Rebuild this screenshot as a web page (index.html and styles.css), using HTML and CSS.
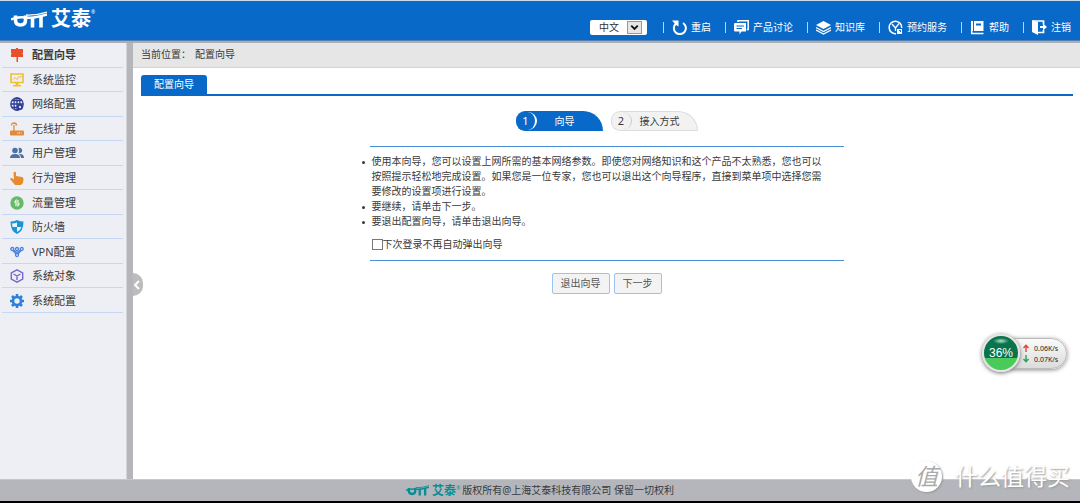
FILE: index.html
```html
<!DOCTYPE html>
<html lang="zh-CN">
<head>
<meta charset="utf-8">
<meta name="viewport" content="width=device-width, initial-scale=1">
<title>配置向导</title>
<link rel="stylesheet" href="styles.css">
</head>
<body>
<svg class="defs" aria-hidden="true">
  <symbol id="mark" viewBox="0 0 36 17">
    <g fill="none" stroke="currentColor">
      <path d="M4.500 4.500v4.500q0 5 5 5t5-5V4.500" stroke-width="3.600"/>
      <path d="M21.500 6v10.500M30 5v11.500" stroke-width="3.600"/>
      <path d="M0 8.500Q6 5.500 15 6.500T36 3.500" stroke-width="2.400"/>
      <path d="M15 4Q25 4.500 36 1" stroke-width="1.300"/>
    </g>
  </symbol>
</svg>

<header class="topbar">
  <div class="logo"><svg class="logo-mark" aria-hidden="true"><use href="#mark"/></svg><span class="logo-name">艾泰</span><sup class="logo-reg">®</sup></div>
  <div class="tools">
    <div class="lang">
      <select aria-label="语言"><option>中文</option><option>English</option></select>
      <span class="lang-arrow"><svg viewBox="0 0 14 11"><path d="M3.500 3.500L7 7l3.500-3.500" fill="none" stroke="#111" stroke-width="2"/></svg></span>
    </div>
    <nav class="links">
      <a href="#"><svg viewBox="0 0 15 15"><path d="M4 3.500A6 6 0 1 0 11 3" fill="none" stroke="#fff" stroke-width="2"/><path d="M0 0.500h6.500v6L4 5z" fill="#fff"/></svg>重启</a>
      <a href="#"><svg viewBox="0 0 15 15"><path d="M4 2V.8h10.200v8.700h-1.500" fill="none" stroke="#fff" stroke-width="1.500"/><path d="M1 3h11v8.500H7.500l-2 3v-3H1q-1 0-1-1V4q0-1 1-1z" fill="#fff"/><path d="M2.500 6H10M2.500 8.500H8" stroke="#0969c9"/></svg>产品讨论</a>
      <a href="#"><svg viewBox="0 0 15 15"><path d="M7.500 1L15 5 7.500 9 0 5z" fill="#fff"/><path d="M0 7.500l7.500 4 7.500-4M0 10l7.500 4 7.500-4" fill="none" stroke="#fff" stroke-width="1.300"/></svg>知识库</a>
      <a href="#"><svg viewBox="0 0 15 15"><path d="M8 13.700A6.300 6.300 0 1 1 13.700 8" fill="none" stroke="#fff" stroke-width="1.500"/><path d="M4 4l3.500 4L11 3.500M7.500 8v3" fill="none" stroke="#fff" stroke-width="1.300"/><path d="M9 9h5v5H9z" fill="#fff"/><path d="M11 10.500h1.500V12" fill="none" stroke="#0969c9"/></svg>预约服务</a>
      <a href="#"><svg viewBox="0 0 15 15"><path d="M1 1h12.500v10H1z" fill="#fff"/><path d="M1.700 8v5.500h11.800" fill="none" stroke="#fff" stroke-width="1.500"/><path d="M3.500 1v10" stroke="#0969c9"/><path d="M6 3.500h5v2H6z" fill="#0969c9"/></svg>帮助</a>
      <a href="#"><svg viewBox="0 0 15 15"><path d="M0 0l6 2v13l-6-3z" fill="#fff"/><path d="M1 1h10.500v3.500M5 12.500h6.500V10" fill="none" stroke="#fff" stroke-width="1.700"/><path d="M8 6h3V3.500L15 7l-4 3.500V8H8z" fill="#fff"/></svg>注销</a>
    </nav>
  </div>
</header>

<div class="main">
  <aside class="sidebar">
    <nav class="menu">
      <a class="current" href="#"><svg viewBox="0 0 14 14"><path d="M1 1h5V0h2v1h5v4l-1 .5 1 .5v3H8v5H6.500V9H1V6l1-.5L1 5z" fill="#e8502c"/></svg>配置向导</a>
      <a href="#"><svg viewBox="0 0 14 14"><path d="M1 1h12v8.500H1z" fill="none" stroke="#f1c02e" stroke-width="1.600"/><path d="M3 6.500l2-2 2 2L9 3.500l1 1L12 3" fill="none" stroke="#f1c02e"/><path d="M5.500 10h3v2h2.500v1.500H3V12h2.500z" fill="#f1c02e"/></svg>系统监控</a>
      <a href="#"><svg viewBox="0 0 14 14"><g fill="none" stroke="#2b3992" stroke-width="1.300"><circle cx="7" cy="7" r="6.200"/><ellipse cx="7" cy="7" rx="3" ry="6.200"/><path d="M1 7h12M2 3.700h10M2 10.300h10M7 1v12"/></g><circle cx="10" cy="10" r="3" fill="#2b3992"/><circle cx="10" cy="10" r="1.200" fill="#dfe2f3"/></svg>网络配置</a>
      <a href="#"><svg viewBox="0 0 14 14"><path d="M1 8.500h12q1 0 1 1V12.500q0 1-1 1H1q-1 0-1-1V9.500q0-1 1-1z" fill="#e28a38"/><path d="M4 9V3M1.500 3.500q0-2.500 2.500-2.500t2.500 2.500" fill="none" stroke="#e28a38" stroke-width="1.300"/><path d="M7.500 11h4" stroke="#fff" stroke-dasharray="1 .7"/></svg>无线扩展</a>
      <a href="#"><svg viewBox="0 0 14 14"><g fill="#4c71a3"><circle cx="5" cy="4.500" r="2.800"/><path d="M0 12q0-4 5-4t5 4z"/><path d="M8.500 2a2.700 2.700 0 1 1 0 5q1-2.500 0-5zM10 8q4 0 4 4h-3q0-2.500-2-3.700z"/></g></svg>用户管理</a>
      <a href="#"><svg viewBox="0 0 14 14"><path d="M3.500 1.500Q5 0 6 1.500V5l6 1q1.500.5 1.500 2L13 12l-2 2H5L0 8q1-1.500 2.500-.5L4 8.500z" fill="#e58c31"/></svg>行为管理</a>
      <a href="#"><svg viewBox="0 0 14 14"><circle cx="7" cy="7" r="6.700" fill="#67ba67"/><path d="M6 10V4.500L4.500 6.500M8 4v5.500L9.500 7.500" fill="none" stroke="#fff" stroke-width="1.100"/></svg>流量管理</a>
      <a href="#"><svg viewBox="0 0 14 14"><path d="M7 0q3 1.500 6.500 1.500 0 10-6.500 12.500Q.5 11.500.5 1.500 4 1.500 7 0z" fill="#1994d8"/><path d="M7 2.500V7H2.500L2 3.500q3 0 5-1zM7 7h4.500Q10.500 10.500 7 12z" fill="#e9f4fb"/></svg>防火墙</a>
      <a href="#"><svg viewBox="0 0 14 14"><g fill="none" stroke="#4a83e0" stroke-width="1.300"><circle cx="2.300" cy="4" r="1.500"/><circle cx="7" cy="4" r="1.500"/><circle cx="11.700" cy="4" r="1.500"/><circle cx="7" cy="10" r="1.500"/><path d="M3 5.500l3 3.500M11 5.500l-3 3.500M3.500 5L7 7.500 10.500 5"/></g></svg>VPN配置</a>
      <a href="#"><svg viewBox="0 0 14 14"><path d="M7 .8l5.700 3v6.400l-5.700 3-5.700-3V3.800zM3.500 5L7 7l3.500-2M7 7v4" fill="none" stroke="#7766d0" stroke-width="1.400"/></svg>系统对象</a>
      <a href="#"><svg viewBox="0 0 14 14"><circle cx="7" cy="7" r="4" fill="none" stroke="#2b80dc" stroke-width="2.600"/><path d="M7 0v3M7 11v3M0 7h3M11 7h3M2 2l2 2M10 10l2 2M12 2l-2 2M4 10l-2 2" stroke="#2b80dc" stroke-width="2.600"/></svg>系统配置</a>
    </nav>
  </aside>

  <div class="splitter">
    <button class="collapse" type="button" aria-label="收起菜单"><svg viewBox="0 0 8 10"><path d="M6 1L2 5l4 4" fill="none" stroke="#fff" stroke-width="2"/></svg></button>
  </div>

  <main class="content">
    <div class="crumbs"><span>当前位置：</span><span>配置向导</span></div>
    <div class="tabs"><a class="tab" href="#">配置向导</a></div>
    <section class="wizard">
      <ol class="steps">
        <li class="step active"><span class="num">1</span><span class="label">向导</span></li>
        <li class="step"><span class="num">2</span><span class="label">接入方式</span></li>
      </ol>
      <div class="panel">
        <ul class="notes">
          <li>使用本向导，您可以设置上网所需的基本网络参数。即使您对网络知识和这个产品不太熟悉，您也可以<br>按照提示轻松地完成设置。如果您是一位专家，您也可以退出这个向导程序，直接到菜单项中选择您需<br>要修改的设置项进行设置。</li>
          <li>要继续，请单击下一步。</li>
          <li>要退出配置向导，请单击退出向导。</li>
        </ul>
        <label class="skip"><input type="checkbox">下次登录不再自动弹出向导</label>
      </div>
      <div class="actions">
        <button type="button">退出向导</button>
        <button type="button">下一步</button>
      </div>
    </section>
  </main>
</div>

<footer class="footer">
  <div class="logo small"><svg class="logo-mark" aria-hidden="true"><use href="#mark"/></svg><span class="logo-name">艾泰</span><sup class="logo-reg">®</sup></div>
  <span>版权所有@上海艾泰科技有限公司 保留一切权利</span>
</footer>

<div class="meter">
  <div class="ball">36%</div>
  <div class="rates">
    <div><svg viewBox="0 0 6 8"><path d="M3 8V2M.5 4L3 1.200 5.500 4" fill="none" stroke="#e2452f" stroke-width="1.400"/></svg>0.06K/s</div>
    <div><svg viewBox="0 0 6 8"><path d="M3 0v6M.5 4L3 6.800 5.500 4" fill="none" stroke="#27a255" stroke-width="1.400"/></svg>0.07K/s</div>
  </div>
</div>

<div class="watermark"><span class="seal">值</span><span>什么值得买</span></div>
</body>
</html>
```
FILE: styles.css
```css
* { box-sizing: border-box; }

body {
  margin: 0;
  min-height: 100vh;
  display: flex;
  flex-direction: column;
  position: relative;
  background: #b4b6bb;
  color: #3a3a3a;
  font: 10px/15px "Noto Sans", "Noto Sans CJK SC", sans-serif;
}

a { color: inherit; text-decoration: none; }
button, select, input { font: inherit; color: inherit; }
.defs { position: absolute; width: 0; height: 0; }

/* top bar */
.topbar {
  display: flex;
  justify-content: space-between;
  height: 43px;
  padding: 0 9px 0 11px;
  background: #0969c9;
  border-top: 1px solid #c9dcf0;
  border-bottom: 2px solid #a9adb5;
  box-shadow: inset 0 -1px #5580b0;
}
.logo { display: flex; align-items: center; color: #fff; height: 36px; }
.logo-mark { width: 36px; height: 17px; }
.logo-name { margin-left: 4px; font-size: 20px; line-height: 24px; font-weight: 700; }
.logo-reg { font-size: 5px; line-height: 5px; align-self: flex-start; margin-top: 9px; }

.tools { display: flex; align-items: center; gap: 16px; padding-top: 12px; color: #fff; }
.lang { position: relative; display: flex; }
.lang select {
  appearance: none;
  width: 57px;
  height: 15px;
  padding: 0 20px 0 9px;
  border: 0;
  border-radius: 2px;
  background: #fff;
  color: #333;
  line-height: 15px;
}
.lang-arrow {
  position: absolute;
  right: 5px;
  top: 1px;
  width: 15px;
  height: 13px;
  border: 1px solid #999;
  background: #e6e6e6;
  pointer-events: none;
}
.lang-arrow svg { display: block; width: 13px; height: 11px; }
.links { display: flex; gap: 14px; }
.links a { display: flex; align-items: center; white-space: nowrap; }
.links a::before { content: ""; width: 1px; height: 11px; background: #b9d5f1; }
.links svg { width: 15px; height: 15px; margin: 0 4px 0 8px; }

/* frame */
.main { flex: 1; display: flex; }
.sidebar { width: 127px; background: #eeeff5; border-right: 1px solid #d3d4da; }
.menu { display: grid; grid-auto-rows: 1fr; min-height: 270px; padding: 0 3px 0 2px; }
.menu a {
  display: flex;
  align-items: center;
  gap: 8px;
  padding: 1px 0 0 8px;
  border-bottom: 1px solid #c4d8f4;
  font-size: 11px;
  line-height: 16px;
}
.menu svg { width: 14px; height: 14px; }
.menu .current { font-weight: 700; }

.splitter { position: relative; width: 6px; background: #b4b6bb; }
.collapse {
  position: absolute;
  left: 6px;
  top: 230px;
  width: 10px;
  height: 23px;
  padding: 0;
  border: 0;
  border-radius: 0 12px 12px 0;
  background: #bcbcbc;
}
.collapse svg { display: block; width: 8px; height: 10px; }

.content { flex: 1; background: #fff; }
.crumbs {
  display: flex;
  gap: 4px;
  padding: 4px 8px 5px;
  background: #e6e6e6;
  border-bottom: 1px solid #d3d3d3;
}
.tabs { display: flex; margin: 7px 7px 0 8px; border-bottom: 2px solid #0969c9; }
.tab {
  padding: 2px 13px;
  border-radius: 3px 3px 0 0;
  background: #0969c9;
  color: #fff;
}

/* wizard */
.wizard { display: flex; flex-direction: column; align-items: center; padding-top: 15px; }
.steps { display: flex; gap: 8px; margin: 0; padding: 0; list-style: none; }
.step {
  display: flex;
  width: 87px;
  height: 20px;
  border: 1px solid #dcdcdc;
  border-radius: 10px 22px 0 10px;
  background: #f2f2f2;
  line-height: 18px;
}
.num {
  width: 20px;
  border-right: 1px solid #ccc;
  border-radius: 10px;
  text-align: center;
  font-size: 11px;
}
.label { flex: 1; padding-right: 9px; text-align: center; }
.step.active { background: #0969c9; border-color: #0969c9; color: #fff; }
.active .num { border-right: 2px solid #fff; }

.panel {
  width: 474px;
  max-width: 100%;
  margin-top: 15px;
  padding: 7px 0 8px 2px;
  border-top: 1px solid #4a90d9;
  border-bottom: 1px solid #4a90d9;
}
.notes { margin: 0; padding: 0; list-style: none; }
.notes li { position: relative; }
.notes li::before {
  content: "";
  position: absolute;
  left: -10px;
  top: 7px;
  width: 3px;
  height: 3px;
  border-radius: 50%;
  background: #3a3a3a;
}
.skip { display: flex; align-items: center; margin-top: 8px; }
.skip input {
  appearance: none;
  width: 11px;
  height: 11px;
  margin: 0;
  border: 1px solid #777;
  background: #fff;
}
.actions { display: flex; gap: 4px; margin-top: 12px; }
.actions button {
  height: 21px;
  padding: 0 8px;
  border: 1px solid #9cc3ef;
  border-radius: 2px;
  background: #f3f3f3;
  color: #555;
}

/* footer */
.footer {
  display: flex;
  align-items: center;
  justify-content: center;
  gap: 2px;
  height: 24px;
  border-top: 1px solid #c6c8cc;
  border-bottom: 2px solid #000;
  background: #b4b6bb;
  white-space: nowrap;
}
.small { height: 20px; color: #078e94; }
.small .logo-mark { width: 23px; height: 11px; }
.small .logo-name { margin-left: 3px; font-size: 12px; line-height: 15px; }
.small .logo-reg { margin-top: 5px; }

/* floating speed meter */
.meter { position: absolute; right: 13px; top: 334px; display: flex; align-items: center; }
.ball {
  position: relative;
  width: 38px;
  height: 38px;
  border: 2px solid #e4e4e4;
  border-radius: 50%;
  background:
    radial-gradient(ellipse 8px 3px at 50% 5px, #b5e0cc, transparent),
    linear-gradient(#08744b 64%, #48cb58 64%);
  box-shadow: 0 1px 4px #666;
  color: #fff;
  font: 12px/34px "Liberation Sans", Arial, sans-serif;
  text-align: center;
}
.rates {
  width: 66px;
  height: 31px;
  margin-left: -19px;
  padding: 4px 0 0 21px;
  border: 1px solid #bbb;
  border-radius: 16px;
  background: linear-gradient(#fafafa, #dcdcdc);
  box-shadow: 0 1px 4px #888;
  color: #222;
  font-size: 7px;
  line-height: 11px;
}
.rates div { display: flex; align-items: center; gap: 5px; }
.rates svg { width: 6px; height: 8px; }

/* watermark */
.watermark {
  position: absolute;
  right: 10px;
  bottom: 11px;
  display: flex;
  align-items: center;
  gap: 13px;
  color: #fff;
  font-size: 23px;
  line-height: 31px;
  text-shadow: 1px 1px 2px #999;
}
.seal {
  width: 31px;
  height: 31px;
  border-radius: 50%;
  background: #fff;
  box-shadow: 1px 1px 2px #999;
  color: #aaa;
  text-align: center;
  font-style: italic;
  text-shadow: none;
}
```
